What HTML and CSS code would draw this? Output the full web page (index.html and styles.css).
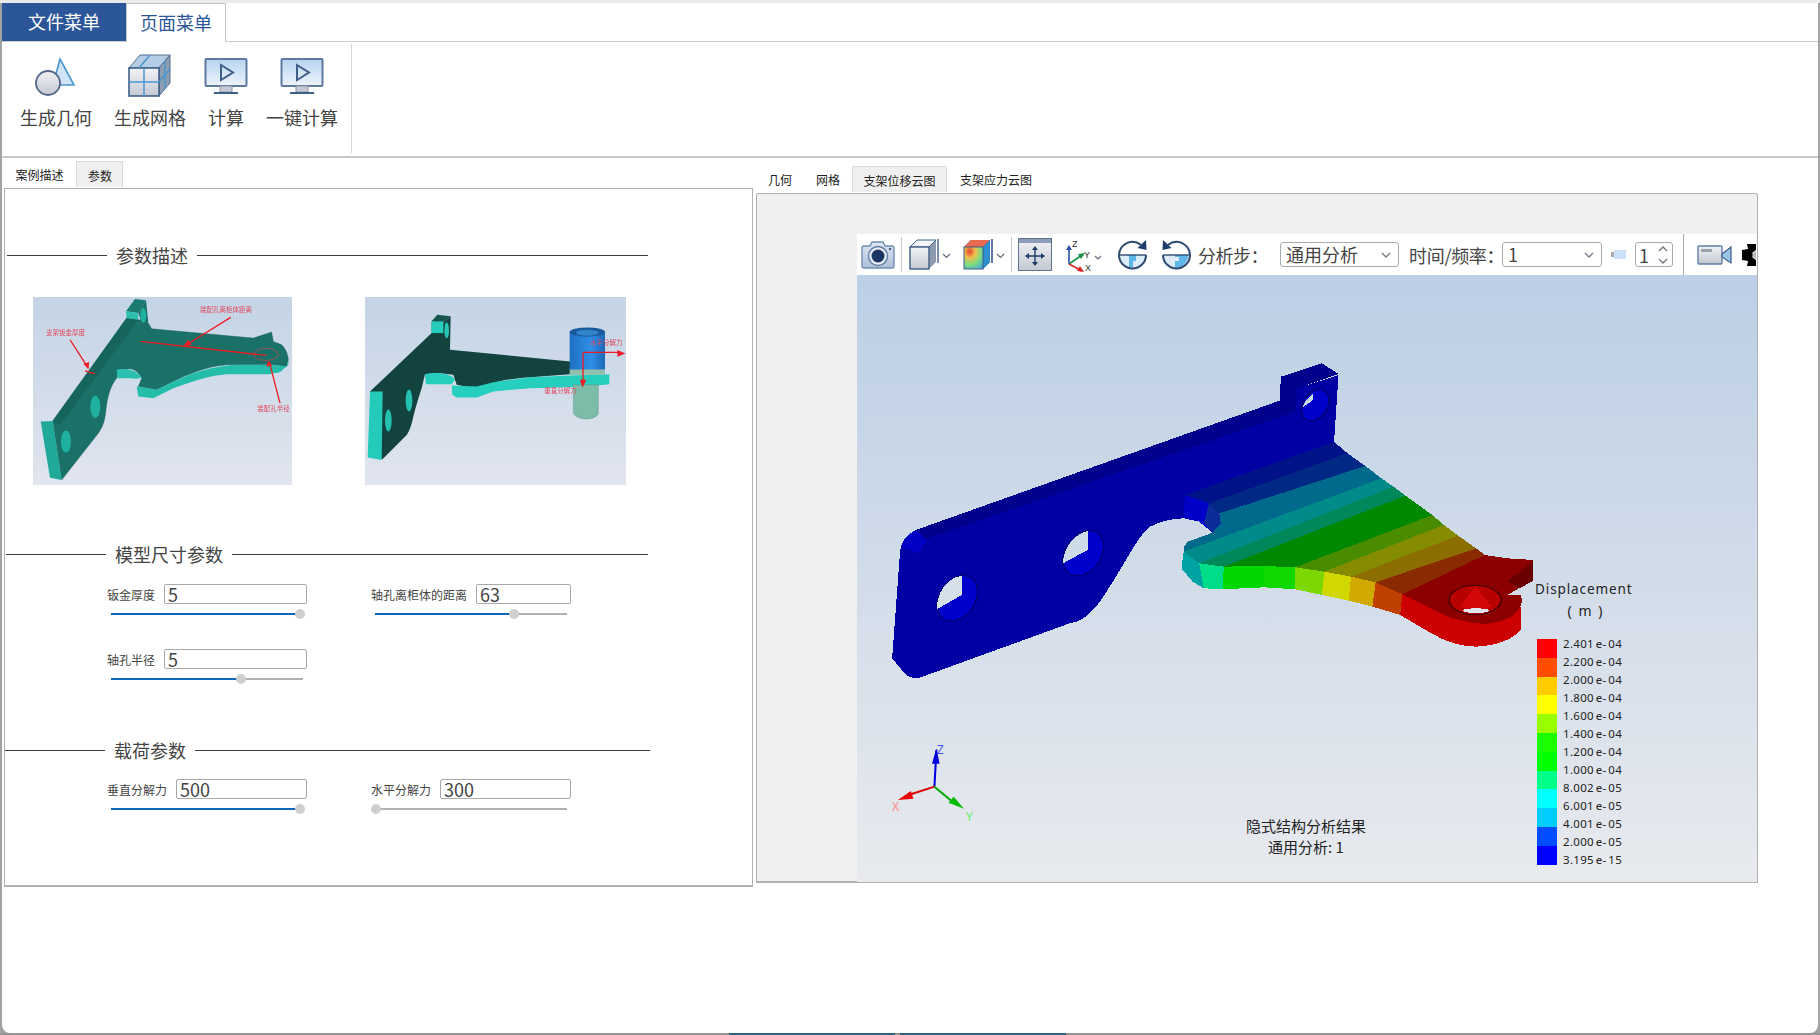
FILE: index.html
```html
<!DOCTYPE html>
<html lang="zh-CN">
<head>
<meta charset="utf-8">
<title>支架分析</title>
<link rel="stylesheet" href="styles.css">
</head>
<body>
<svg class="defs" width="0" height="0" aria-hidden="true">
  <defs>
    <linearGradient id="gGlass" x1="0" y1="0" x2="0" y2="1"><stop offset="0" stop-color="#b7d3f0"/><stop offset="1" stop-color="#eef4fb"/></linearGradient>
    <linearGradient id="gGrey" x1="0" y1="0" x2="0" y2="1"><stop offset="0" stop-color="#f2f3f6"/><stop offset="1" stop-color="#c3c8d2"/></linearGradient>
    <linearGradient id="gCam" x1="0" y1="0" x2="0" y2="1"><stop offset="0" stop-color="#dfe8f3"/><stop offset="1" stop-color="#aebfd6"/></linearGradient>
    <linearGradient id="gBg" x1="0" y1="0" x2="0" y2="1"><stop offset="0" stop-color="#c4d4e6"/><stop offset="1" stop-color="#e1e5ee"/></linearGradient>
    <linearGradient id="gView" x1="0" y1="0" x2="0" y2="1"><stop offset="0" stop-color="#bccfe5"/><stop offset="1" stop-color="#e8eaee"/></linearGradient>
    <linearGradient id="gBlue" x1="0" y1="0" x2="1" y2="0"><stop offset="0" stop-color="#1e6fc0"/><stop offset=".6" stop-color="#2f8fe8"/><stop offset="1" stop-color="#1c68b8"/></linearGradient>
    <radialGradient id="gHeat" cx=".3" cy=".2" r="1"><stop offset="0" stop-color="#e2402c"/><stop offset=".3" stop-color="#f0c050"/><stop offset=".6" stop-color="#7fdc80"/><stop offset="1" stop-color="#3fa8e0"/></radialGradient>
  </defs>
</svg>

<main class="window">
  <nav class="menu-tabs">
    <div class="menu-tab menu-tab-file">文件菜单</div>
    <div class="menu-tab menu-tab-page">页面菜单</div>
  </nav>

  <section class="ribbon">
    <div class="ribbon-btn">
      <svg class="ribbon-icon" width="44" height="44" viewBox="0 0 44 44">
        <path d="M26 5 40 31H19Z" fill="#cfe4f6" stroke="#4a97cf" stroke-width="1.6"/>
        <circle cx="14" cy="29" r="12" fill="url(#gGrey)" stroke="#54678a" stroke-width="1.8"/>
      </svg>
      <span>生成几何</span>
    </div>
    <div class="ribbon-btn">
      <svg class="ribbon-icon" width="44" height="44" viewBox="0 0 44 44">
        <path d="M12 1H42L31 14H1Z" fill="#b5cde4" stroke="#54708f"/>
        <path d="M31 14 42 1V29L31 42Z" fill="#8d9db2" stroke="#54708f"/>
        <rect x="1" y="14" width="30" height="28" fill="url(#gGrey)" stroke="#3f5f88" stroke-width="1.6"/>
        <path d="M16 14V42M1 28H31M22 1 11 14M31 28 42 15M37 7V35" fill="none" stroke="#4a97cf" stroke-width="1.5"/>
      </svg>
      <span>生成网格</span>
    </div>
    <div class="ribbon-btn">
      <svg class="ribbon-icon" width="44" height="44" viewBox="0 0 44 44">
        <rect x="1.5" y="5" width="41" height="27" rx="1" fill="url(#gGlass)" stroke="#5f7a9f" stroke-width="2"/>
        <path d="M17 11 29 18.500 17 26Z" fill="none" stroke="#3f5f88" stroke-width="2"/>
        <rect x="16" y="32" width="12" height="6" fill="#c5cbd5" stroke="#8793a5"/>
        <path d="M10 39H34" stroke="#3f5f88" stroke-width="2"/>
      </svg>
      <span>计算</span>
    </div>
    <div class="ribbon-btn">
      <svg class="ribbon-icon" width="44" height="44" viewBox="0 0 44 44">
        <rect x="1.5" y="5" width="41" height="27" rx="1" fill="url(#gGlass)" stroke="#5f7a9f" stroke-width="2"/>
        <path d="M17 11 29 18.500 17 26Z" fill="none" stroke="#3f5f88" stroke-width="2"/>
        <rect x="16" y="32" width="12" height="6" fill="#c5cbd5" stroke="#8793a5"/>
        <path d="M10 39H34" stroke="#3f5f88" stroke-width="2"/>
      </svg>
      <span>一键计算</span>
    </div>
    <div class="ribbon-sep"></div>
  </section>

  <div class="content">
    <div class="left-col">
      <div class="small-tabs left-tabs">
        <div class="small-tab">案例描述</div>
        <div class="small-tab small-tab-on">参数</div>
      </div>
      <div class="params">
        <div class="head head-a"><i class="rule rule-l"></i><span>参数描述</span><i class="rule"></i></div>
        <div class="figures">
          <svg class="fig fig-a" viewBox="39 37 777 563" preserveAspectRatio="none">
            <rect x="39" y="37" width="777" height="563" fill="url(#gBg)"/>
            <path d="M318 80 345 43 378 47 355 85Z" fill="#1a7a70"/>
            <path d="M98 408 320 100 355 105 362 105 385 115 395 132 700 160 755 142 760 170 785 180C800 195 805 215 805 225L800 245 760 240 620 240C560 245 500 270 460 290L410 315 355 305 365 280C355 262 345 255 330 252L295 258 290 280C270 305 262 340 258 375 255 405 250 425 235 445L125 585Z" fill="#1a7168" stroke="#155a54"/>
            <path d="M98 408 320 100 355 105 120 420Z" fill="#16655d"/>
            <path d="M355 85 378 47 385 115 362 105Z" fill="#1a7168"/>
            <path d="M318 80 355 85 355 105 320 100Z" fill="#2bbfae"/>
            <path d="M62 410 98 408 125 585 90 578Z" fill="#20a898"/>
            <path d="M290 255C310 250 345 250 365 278L350 282C340 280 315 280 292 280Z" fill="#2abfae"/>
            <path d="M350 305 410 315C440 300 500 270 530 262 570 250 620 240 660 240L760 240 800 245 805 225 805 240 780 262 745 268 620 268C570 272 530 285 460 310L400 340 355 335Z" fill="#24bdaa"/>
            <ellipse cx="138" cy="470" rx="15" ry="33" fill="#20b0a0"/>
            <ellipse cx="226" cy="366" rx="15" ry="33" fill="#20b0a0"/>
            <ellipse cx="370" cy="92" rx="9" ry="22" fill="#20b0a0"/>
            <ellipse cx="738" cy="209" rx="36" ry="18" fill="#167068" stroke="#d8454a" stroke-width="2"/>
            <path d="M362 170 740 212M150 165 205 250M195 258 225 267M632 98 495 183M780 355 748 232" fill="none" stroke="#ee1c25" stroke-width="4"/>
            <path d="M205 253 190 237 208 232ZM490 186 504 165 515 180ZM746 228 738 245 757 243Z" fill="#ee1c25"/>
            <text class="fig-note" x="540" y="81">装配孔离柜体距离</text>
            <text class="fig-note" x="78" y="151">支架钣金厚度</text>
            <text class="fig-note" x="712" y="378">装配孔半径</text>
          </svg>
          <svg class="fig fig-b" viewBox="45 37 783 563" preserveAspectRatio="none">
            <rect x="45" y="37" width="783" height="563" fill="url(#gBg)"/>
            <path d="M244 110 262 90 302 95 280 115Z" fill="#15564f"/>
            <path d="M280 115 302 95 300 195 660 230 660 268 540 277C480 282 440 288 420 300L380 312 320 300 310 270 270 265 225 268 215 310C205 340 195 375 190 395 185 420 178 440 170 450L95 525 60 320 245 145 245 110Z" fill="#12433f"/>
            <path d="M244 110H280V145H244Z" fill="#27cdbc"/>
            <ellipse cx="290" cy="137" rx="7" ry="24" fill="#28c4b4"/>
            <path d="M60 320 98 320 95 525 53 518Z" fill="#24cbbb"/>
            <ellipse cx="177" cy="347" rx="10" ry="33" fill="#24c0b0"/>
            <ellipse cx="115" cy="407" rx="10" ry="33" fill="#24c0b0"/>
            <path d="M225 268C250 262 300 262 315 285L305 298 228 298Z" fill="#27cdbc"/>
            <path d="M305 302 380 305 430 292 540 277 660 272 778 268 778 298 700 306 540 310 430 320 380 338 320 338 307 330Z" fill="#26cfbd"/>
            <path d="M670 300H745V385C740 408 680 408 670 385Z" fill="#7cbca8" stroke="#52897a"/>
            <rect x="659" y="250" width="106" height="20" fill="#8fc0ae"/>
            <rect x="659" y="142" width="106" height="112" fill="url(#gBlue)"/>
            <ellipse cx="712" cy="142" rx="53" ry="14" fill="#1a5a9c"/>
            <ellipse cx="712" cy="144" rx="34" ry="9" fill="#2f84ca"/>
            <path d="M699 205V290M699 203H810" fill="none" stroke="#ee1c25" stroke-width="4"/>
            <path d="M689 285 709 285 698 308ZM802 196 826 206 802 216Z" fill="#ee1c25"/>
            <text class="fig-note" x="720" y="182">水平分解力</text>
            <text class="fig-note" x="583" y="325">垂直分解力</text>
          </svg>
        </div>

        <div class="head head-b"><i class="rule rule-l"></i><span>模型尺寸参数</span><i class="rule"></i></div>
        <div class="fields">
          <div class="field">
            <div class="field-top"><label>钣金厚度</label><input value="5"></div>
            <div class="track"><b style="width:98.500%"></b><em style="left:98.500%"></em></div>
          </div>
          <div class="field">
            <div class="field-top"><label>轴孔离柜体的距离</label><input value="63"></div>
            <div class="track"><b style="width:72.400%"></b><em style="left:72.400%"></em></div>
          </div>
          <div class="field">
            <div class="field-top"><label>轴孔半径</label><input value="5"></div>
            <div class="track"><b style="width:67.700%"></b><em style="left:67.700%"></em></div>
          </div>
        </div>

        <div class="head head-c"><i class="rule rule-l"></i><span>载荷参数</span><i class="rule"></i></div>
        <div class="fields fields-load">
          <div class="field">
            <div class="field-top"><label>垂直分解力</label><input value="500"></div>
            <div class="track"><b style="width:98.500%"></b><em style="left:98.500%"></em></div>
          </div>
          <div class="field">
            <div class="field-top"><label>水平分解力</label><input value="300"></div>
            <div class="track"><b style="width:0"></b><em style="left:0.500%"></em></div>
          </div>
        </div>
      </div>
    </div>

    <div class="right-col">
      <div class="small-tabs right-tabs">
        <div class="small-tab">几何</div>
        <div class="small-tab">网格</div>
        <div class="small-tab small-tab-on">支架位移云图</div>
        <div class="small-tab">支架应力云图</div>
      </div>
      <div class="stage">
        <div class="toolbar">
          <svg class="t-cam" width="34" height="30" viewBox="0 0 34 30">
            <path d="M2 6H9L11 2H22L24 6H31Q33 6 33 8V26Q33 28 31 28H3Q1 28 1 26V8Q1 6 3 6Z" fill="url(#gCam)" stroke="#6f8db4" stroke-width="1.400"/>
            <circle cx="17" cy="16" r="9.500" fill="#e7edf5" stroke="#5f7ea8" stroke-width="1.400"/>
            <circle cx="17" cy="16" r="6.500" fill="#1b3565"/>
            <circle cx="29" cy="9" r="1.200" fill="#3f5f88"/>
          </svg>
          <i class="t-sep t-sep-a"></i>
          <svg class="t-cube" width="45" height="32" viewBox="0 0 45 32">
            <path d="M1 8 8 1H27V23L20 30H1Z" fill="#8e9bae"/>
            <path d="M1 8 8 1H27L20 8Z" fill="#f4f5f8" stroke="#3f5f88"/>
            <rect x="1" y="8" width="19" height="22" fill="url(#gGrey)" stroke="#3f5f88" stroke-width="1.400"/>
            <path d="M29 0V24" stroke="#3f5f88" stroke-width="1.400"/>
            <path d="M34 15 37.500 18.500 41 15" fill="none" stroke="#5d6b7d" stroke-width="1.200"/>
          </svg>
          <svg class="t-heat" width="45" height="32" viewBox="0 0 45 32">
            <path d="M1 8 8 1H27V23L20 30H1Z" fill="#2a50a8"/>
            <path d="M1 8 8 1H27L20 8Z" fill="#e86a50"/>
            <path d="M20 8 27 1V23L20 30Z" fill="#2b8fd0"/>
            <rect x="1" y="8" width="19" height="22" fill="url(#gHeat)" stroke="#3f5f88"/>
            <path d="M29 0V24" stroke="#24408a" stroke-width="1.400"/>
            <path d="M34 15 37.500 18.500 41 15" fill="none" stroke="#5d6b7d" stroke-width="1.200"/>
          </svg>
          <i class="t-sep t-sep-b"></i>
          <svg class="t-fit" width="34" height="33" viewBox="0 0 34 33">
            <rect x=".5" y=".5" width="33" height="32" fill="url(#gGrey)" stroke="#5f7391"/>
            <rect x="1" y="1" width="32" height="4" fill="#8b9db8"/>
            <path d="M17 10V27M9 18H25" stroke="#1e3c6a" stroke-width="1.400"/>
            <path d="M17 8 20 12H14ZM17 28 14 24H20ZM7 18 11 15V21ZM27 18 23 21V15Z" fill="#1e3c6a"/>
          </svg>
          <svg class="t-axes" width="42" height="34" viewBox="0 0 42 34">
            <path d="M4 26V10" stroke="#2a50a8" stroke-width="1.600"/>
            <path d="M4 7 7 12H1Z" fill="#2a50a8"/>
            <path d="M4 26 17 17" stroke="#1a8f4a" stroke-width="1.600"/>
            <path d="M20 15 16 21 13 16Z" fill="#1a8f4a"/>
            <path d="M4 26 17 33" stroke="#e02424" stroke-width="1.600"/>
            <path d="M19 34 12 33 15 28Z" fill="#e02424"/>
            <text class="t-axis-txt" x="7" y="9">Z</text>
            <text class="t-axis-txt" x="19" y="20">Y</text>
            <text class="t-axis-txt" x="20" y="33">X</text>
            <path d="M30 18 33 21 36 18" fill="none" stroke="#5d6b7d" stroke-width="1.200"/>
          </svg>
          <svg class="t-rot" width="31" height="32" viewBox="0 0 31 32">
            <path d="M2 16H29A13.500 13.500 0 0 1 15.500 29.500 13.500 13.500 0 0 1 2 16Z" fill="#dcecf9"/>
            <path d="M12 16H19V22H16V28.500A13.500 13.500 0 0 1 12 28Z" fill="#5fb6e8"/>
            <path d="M24 6A13.500 13.500 0 0 0 2 16 13.500 13.500 0 0 0 29 16" fill="none" stroke="#2f4a72" stroke-width="2"/>
            <path d="M2 16H29" stroke="#2f4a72" stroke-width="1.400"/>
            <path d="M29 1 29.500 11 20.500 9Z" fill="#1e3c6a"/>
          </svg>
          <svg class="t-rot t-rot-b" width="31" height="32" viewBox="0 0 31 32">
            <path d="M2 16H29A13.500 13.500 0 0 1 15.500 29.500 13.500 13.500 0 0 1 2 16Z" fill="#dcecf9"/>
            <path d="M14 16H27A13.500 13.500 0 0 1 14 29.500V22H18V18H14Z" fill="#5fb6e8"/>
            <path d="M7 6A13.500 13.500 0 0 1 29 16 13.500 13.500 0 0 1 2 16" fill="none" stroke="#2f4a72" stroke-width="2"/>
            <path d="M2 16H29" stroke="#2f4a72" stroke-width="1.400"/>
            <path d="M2 1 1.500 11 10.500 9Z" fill="#1e3c6a"/>
          </svg>
          <span class="t-label t-label-step">分析步：</span>
          <div class="combo combo-step"><span>通用分析</span><svg width="12" height="8" viewBox="0 0 12 8"><path d="M2 2 6 6 10 2" fill="none" stroke="#6d7883" stroke-width="1.300"/></svg></div>
          <span class="t-label t-label-time">时间/频率：</span>
          <div class="combo combo-time"><span>1</span><svg width="12" height="8" viewBox="0 0 12 8"><path d="M2 2 6 6 10 2" fill="none" stroke="#6d7883" stroke-width="1.300"/></svg></div>
          <div class="mini"><i></i><b></b></div>
          <div class="spin"><span>1</span><svg width="12" height="20" viewBox="0 0 12 20"><path d="M2 6 6 2 10 6M2 14 6 18 10 14" fill="none" stroke="#6d7883" stroke-width="1.300"/></svg></div>
          <i class="t-sep t-sep-c"></i>
          <svg class="t-video" width="35" height="20" viewBox="0 0 35 20">
            <rect x="1" y="1" width="24" height="18" rx="1" fill="url(#gGrey)" stroke="#5f7ea8" stroke-width="1.400"/>
            <rect x="4" y="4" width="11" height="3" fill="#9aa3b0"/>
            <path d="M25 9 34 2V18L25 12Z" fill="#9cc6e8" stroke="#3f5f88" stroke-width="1.200"/>
          </svg>
          <svg class="t-crop" width="14" height="22" viewBox="0 0 14 22">
            <path d="M5 0H14V6L10 9 12 11 10 13 14 16V22H5L6 17 0 16V6L6 5Z" fill="#000"/>
            <path d="M14 6 10 11 14 16Z" fill="#bbb"/>
          </svg>
        </div>
        <div class="view">
          <svg class="model" width="900" height="607" viewBox="857 275 900 607">
            <rect x="857" y="275" width="900" height="607" fill="url(#gView)"/>
            <g transform="translate(860 350) scale(.4464 .3333)" shape-rendering="crispEdges">
              <path d="M125 540 940 152 943 80 1035 40 1072 72 980 115 975 185 130 575Z" fill="#00008c"/>
              <path d="M90 600Q95 565 125 540L130 575 975 185 980 115 1072 75 1062 275 728 435 725 505C700 505 670 515 650 530 620 560 600 630 540 750 510 805 490 815 470 820L130 985Q110 985 100 970L72 925Z" fill="#0000a4"/>
              <path d="M92 590Q97 560 125 540L150 570 130 610Z" fill="#0000c4"/>
              <path d="M728 435 782 460 808 520 790 548 760 515 725 505Z" fill="#0000c8"/>
              <path d="M782 460 805 490 808 520 790 548 770 520Z" fill="#0a2d9a"/>
              <path d="M1062 275 1092 310 782 460 728 435Z" fill="#001288"/>
              <path d="M1092 310 1132 348 805 490 782 460Z" fill="#002885"/>
              <path d="M1132 348 1168 385 725 605 725 590 735 575 790 548 808 520 805 490Z" fill="#006a8c"/>
              <path d="M1168 385 1195 410 760 640 725 605Z" fill="#008a8a"/>
              <path d="M1195 410 1222 437 815 650 760 640Z" fill="#00885a"/>
              <path d="M1222 437 1282 495 975 652 905 648 815 650Z" fill="#008800"/>
              <path d="M1282 495 1308 525 1040 665 975 652Z" fill="#4a8c00"/>
              <path d="M1308 525 1340 557 1100 680 1040 665Z" fill="#868c00"/>
              <path d="M1340 557 1380 595 1155 697 1100 680Z" fill="#8c6e00"/>
              <path d="M1380 595 1405 620 1450 625 1215 733 1155 697Z" fill="#8a2a00"/>
              <path d="M725 605 760 640 770 715 745 695 720 655Z" fill="#00a2a4"/>
              <path d="M760 640 815 650 812 718 770 715Z" fill="#00dd88"/>
              <path d="M815 650 905 648 905 712 812 718Z" fill="#00d800"/>
              <path d="M905 648 975 652 975 718 905 712Z" fill="#10d800"/>
              <path d="M975 652 1040 665 1035 735 975 718Z" fill="#7cd800"/>
              <path d="M1040 665 1100 680 1095 752 1035 735Z" fill="#d0d800"/>
              <path d="M1100 680 1155 697 1148 770 1095 752Z" fill="#d0aa00"/>
              <path d="M1155 697 1215 733 1210 795 1148 770Z" fill="#c04000"/>
              <path d="M1215 733 1300 790Q1350 820 1400 822 1450 815 1480 770L1480 840Q1450 885 1380 890 1330 890 1280 850L1210 795Z" fill="#cc0000"/>
              <path d="M1215 733 1400 615 1450 625 1508 630 1508 690 1450 735 1480 735Q1490 770 1460 800 1430 820 1400 822 1350 820 1300 790Z" fill="#8c0000"/>
              <path d="M1508 632 1508 692 1478 715 1450 695Z" fill="#6a0000"/>
              <ellipse cx="1378" cy="750" rx="58" ry="44" fill="#b80000" stroke="#3a0000" stroke-width="3"/>
              <path d="M1345 770 1378 708 1415 770Q1380 790 1345 770Z" fill="#d40808"/>
              <ellipse cx="1380" cy="782" rx="30" ry="7" fill="#dfe5ec"/>
              <ellipse cx="218" cy="745" rx="42" ry="70" transform="rotate(18 218 745)" fill="#0000cc" stroke="#000070" stroke-width="3"/>
              <path d="M228 677C190 685 172 735 172 778L228 735Z" fill="#d4dfea"/>
              <ellipse cx="500" cy="610" rx="42" ry="70" transform="rotate(18 500 610)" fill="#0000cc" stroke="#000070" stroke-width="3"/>
              <path d="M510 543C475 555 455 600 455 640L510 600Z" fill="#cddbe9"/>
              <ellipse cx="1020" cy="165" rx="28" ry="48" transform="rotate(18 1020 165)" fill="#0000cc" stroke="#000070" stroke-width="3"/>
              <path d="M1015 130C1002 145 992 160 992 172L1015 150Z" fill="#c6d6e7"/>
            </g>
            <g transform="translate(860 720) scale(.3444 .3333)">
              <path d="M216 200 222 90" stroke="#0000dd" stroke-width="6"/>
              <path d="M222 85 209 131H231Z" fill="#0000dd"/>
              <path d="M216 200 150 222" stroke="#dd0000" stroke-width="6"/>
              <path d="M110 240 148 213 155 236Z" fill="#ee0000"/>
              <path d="M216 200 265 242" stroke="#00aa00" stroke-width="6"/>
              <path d="M302 266 257 248 272 230Z" fill="#00bb00"/>
            </g>
            <text class="axis axis-z" x="937" y="754">Z</text>
            <text class="axis axis-x" x="892" y="811">X</text>
            <text class="axis axis-y" x="966" y="821">Y</text>
          </svg>
          <div class="legend">
            <div class="legend-title">Displacement</div>
            <div class="legend-unit">( m )</div>
            <div class="legend-body">
              <div class="swatches">
                <i class="s1"></i><i class="s2"></i><i class="s3"></i><i class="s4"></i><i class="s5"></i><i class="s6"></i><i class="s7"></i><i class="s8"></i><i class="s9"></i><i class="s10"></i><i class="s11"></i><i class="s12"></i>
              </div>
              <ul class="legend-vals">
                <li>2.401 e- 04</li><li>2.200 e- 04</li><li>2.000 e- 04</li><li>1.800 e- 04</li><li>1.600 e- 04</li><li>1.400 e- 04</li><li>1.200 e- 04</li><li>1.000 e- 04</li><li>8.002 e- 05</li><li>6.001 e- 05</li><li>4.001 e- 05</li><li>2.000 e- 05</li><li>3.195 e- 15</li>
              </ul>
            </div>
          </div>
          <div class="caption">隐式结构分析结果<br>通用分析: 1</div>
        </div>
      </div>
    </div>
  </div>
</main>
<footer class="taskbar"><i></i><i></i></footer>
</body>
</html>
```

FILE: styles.css
```css
* { box-sizing: border-box; }
html, body { margin: 0; height: 1035px; overflow: hidden; }
body {
  width: 1820px;
  display: flex;
  flex-direction: column;
  padding-top: 3px;
  background: linear-gradient(#e9eaec 0 3px, #a2a2a2 3px);
  font-family: "Noto Sans CJK SC", "Noto Sans", sans-serif;
  color: #444;
}
.defs { position: absolute; }

.window {
  margin: 0 2px;
  height: 1030px;
  flex: none;
  background: #fff;
  border-radius: 0 0 8px 8px;
}

.menu-tabs { display: flex; height: 39px; border-bottom: 1px solid #ccc; }
.menu-tab { height: 39px; font-size: 18px; line-height: 36px; text-align: center; }
.menu-tab-file { width: 124px; height: 38px; background: #2b579a; color: #fff; }
.menu-tab-page {
  width: 100px;
  background: #fff;
  color: #2b579a;
  border: 1px solid #c4c4c4;
  border-bottom: 0;
}

.ribbon {
  display: flex;
  gap: 22px;
  height: 116px;
  padding-left: 18px;
  border-bottom: 2px solid #c8c8c8;
}
.ribbon-btn { display: flex; flex-direction: column; align-items: center; padding-top: 12px; font-size: 18px; line-height: 26px; }
.ribbon-icon { display: block; margin: 0 -4px 6px; }
.ribbon-sep { width: 1px; margin: 2px 0 3px -9px; background: #d6d6d6; }

.content { display: flex; align-items: flex-start; padding-left: 2px; }

.left-col { width: 749px; flex: none; padding-top: 3px; }
.right-col { width: 1002px; flex: none; margin-left: 3px; padding-top: 8px; }

.small-tabs { display: flex; font-size: 12px; color: #222; }
.small-tab { height: 26px; line-height: 28px; text-align: center; }
.small-tab-on { background: #f0f0f0; border: 1px solid #dadada; border-bottom: 0; }

.left-tabs { height: 27px; padding-left: 1px; }
.left-tabs .small-tab:first-child { width: 71px; padding-right: 2px; }
.left-tabs .small-tab-on { width: 47px; padding-left: 1px; }

.right-tabs { height: 27px; }
.right-tabs .small-tab { width: 48px; }
.right-tabs .small-tab-on { width: 95px; }
.right-tabs .small-tab:last-child { width: 98px; }

.params {
  height: 699px;
  padding-top: 51px;
  border: 1px solid #b0b0b0;
  border-bottom-width: 2px;
}

.head { display: flex; align-items: center; height: 30px; gap: 9px; font-size: 18px; color: #444; }
.rule { flex: 1; height: 1px; background: #3c3c3c; }
.rule-l { flex: none; width: 100px; }
.head-a { margin: 0 104px 0 2px; }
.head-b { margin: 54px 104px 0 1px; }
.head-c { margin: 51px 102px 0 0; }

.figures { display: flex; gap: 73px; margin: 27px 0 0 28px; }
.fig { display: block; height: 188px; filter: blur(.35px); }
.fig-a { width: 259px; }
.fig-b { width: 261px; }
.fig-note { font-size: 19.500px; fill: #e2485c; font-family: "Noto Sans CJK SC", sans-serif; }

.fields {
  display: grid;
  grid-template-columns: 200px 200px;
  column-gap: 64px;
  row-gap: 30px;
  margin: 15px 0 0 102px;
}
.fields-load { margin-top: 14px; }
.field-top { display: flex; align-items: center; gap: 9px; height: 20px; font-size: 12px; color: #444; }
.field-top label { white-space: nowrap; }
.field-top input {
  flex: 1;
  min-width: 0;
  height: 20px;
  padding: 0 0 0 3px;
  border: 1px solid #a8a8a8;
  border-radius: 2px;
  font: 18px/18px "Noto Sans CJK SC", sans-serif;
  color: #444;
  outline: none;
}
.track {
  position: relative;
  width: 192px;
  height: 2px;
  margin: 9px 0 4px 4px;
  background: #b0b0b0;
}
.track b { display: block; height: 2px; background: #0f66b8; }
.track em {
  position: absolute;
  top: -4px;
  width: 10px;
  height: 10px;
  margin-left: -5px;
  border-radius: 50%;
  background: #cfcfcf;
}

.stage {
  height: 690px;
  width: 1002px;
  padding: 40px 0 0 100px;
  background: #f0f0f0;
  border: 1px solid #b0b0b0;
  border-bottom-width: 2px;
  border-radius: 2px 2px 0 0;
}

.toolbar {
  display: flex;
  align-items: center;
  width: 900px;
  height: 41px;
  background: #fff;
  font-size: 18px;
  color: #444;
  overflow: hidden;
}
.toolbar > * { flex: none; }
.t-cam { margin-left: 4px; }
.t-sep { width: 1px; align-self: stretch; background: #c9c9c9; }
.t-sep-a { margin: 3px 0 3px 6px; }
.t-cube { margin-left: 7px; }
.t-heat { margin-left: 9px; }
.t-sep-b { margin: 3px 0 3px 3px; }
.t-fit { margin-left: 6px; }
.t-axes { margin-left: 13px; }
.t-axis-txt { font: 9px "Liberation Sans", sans-serif; fill: #333; }
.t-rot { margin-left: 10px; }
.t-rot-b { margin-left: 13px; }
.t-label { white-space: nowrap; }
.t-label-step { width: 82px; margin-left: 6px; letter-spacing: -.5px; }
.t-label-time { width: 85px; margin-left: 10px; letter-spacing: -.3px; }
.combo {
  display: flex;
  align-items: center;
  justify-content: space-between;
  height: 25px;
  padding: 0 6px 0 5px;
  background: #fff;
  border: 1px solid #aaa;
  border-radius: 3px;
  line-height: 23px;
}
.combo-step { width: 119px; }
.combo-time { width: 100px; margin-left: 8px; }
.mini { display: flex; align-items: center; width: 15px; margin-left: 9px; }
.mini i { width: 3px; height: 5px; background: #a9a9a9; }
.mini b { width: 12px; height: 9px; background: #cce2fb; }
.spin {
  display: flex;
  align-items: center;
  justify-content: space-between;
  width: 38px;
  height: 25px;
  margin-left: 9px;
  padding: 0 3px 0 3px;
  border: 1px solid #aaa;
  border-radius: 3px;
}
.t-sep-c { margin-left: 10px; background: #aaa; }
.t-video { margin-left: 13px; }
.t-crop { margin-left: 10px; }

.view { position: relative; width: 900px; height: 607px; }
.model { display: block; }
.axis { font: 12px "Noto Sans", sans-serif; }
.axis-z { fill: #4a55ee; }
.axis-x { fill: #f58a8a; }
.axis-y { fill: #66ee66; }

.legend { position: absolute; left: 678px; top: 305px; width: 110px; color: #222; }
.legend-title { font: 13.500px/18px "Noto Sans", sans-serif; letter-spacing: .9px; white-space: nowrap; }
.legend-unit { width: 100px; margin-top: 4px; text-align: center; font: 14px/18px "Noto Sans", sans-serif; word-spacing: 3px; }
.legend-body { display: flex; gap: 6px; margin-top: 19px; }
.swatches { display: flex; flex-direction: column; width: 20px; margin-left: 2px; }
.swatches i { display: block; height: 18.800px; }
.s1 { background: #ff0000; }
.s2 { background: #ff4d00; }
.s3 { background: #ffcc00; }
.s4 { background: #ffff00; }
.s5 { background: #99ff00; }
.s6 { background: #19ff00; }
.s7 { background: #00ff00; }
.s8 { background: #00ff88; }
.s9 { background: #00ffff; }
.s10 { background: #00ccff; }
.s11 { background: #004dff; }
.s12 { background: #0000ff; }
.legend-vals { margin: -4px 0 0; padding: 0; list-style: none; font: 11.500px/18px "Noto Sans", sans-serif; white-space: nowrap; word-spacing: -1.500px; letter-spacing: .3px; }

.caption {
  position: absolute;
  left: 349px;
  top: 540px;
  width: 200px;
  text-align: center;
  font-size: 15px;
  line-height: 21px;
  color: #222;
}

.taskbar { flex: 1; display: flex; gap: 5px; padding-left: 729px; background: #959595; }
.taskbar i { display: block; width: 166px; height: 2px; background: #2b6284; }
```
